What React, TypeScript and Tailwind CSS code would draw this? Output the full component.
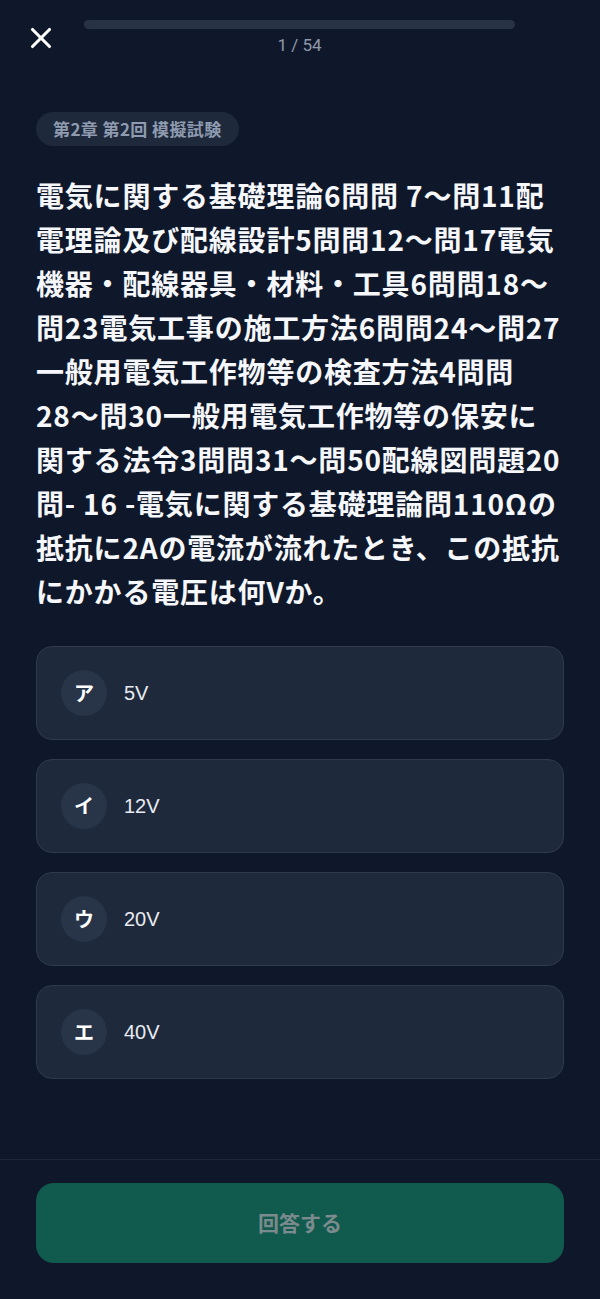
import { X } from "lucide-react";

const lines = [
  "電気に関する基礎理論6問問 7〜問11配",
  "電理論及び配線設計5問問12〜問17電気",
  "機器・配線器具・材料・工具6問問18〜",
  "問23電気工事の施工方法6問問24〜問27",
  "一般用電気工作物等の検査方法4問問",
  "28〜問30一般用電気工作物等の保安に",
  "関する法令3問問31〜問50配線図問題20",
  "問- 16 -電気に関する基礎理論問110Ωの",
  "抵抗に2Aの電流が流れたとき、この抵抗",
  "にかかる電圧は何Vか。",
];

const choices = [
  { label: "ア", text: "5V" },
  { label: "イ", text: "12V" },
  { label: "ウ", text: "20V" },
  { label: "エ", text: "40V" },
];

export default function App() {
  return (
    <div
      className="min-h-[1299px] w-full bg-[#0f172a] text-white flex flex-col"
      style={{ fontFamily: '"Noto Sans CJK JP", "Noto Sans", sans-serif' }}
    >
      {/* Header */}
      <div className="flex items-start px-5 pt-[14px]">
        <button className="w-11 h-11 flex items-center justify-center text-white -ml-[1px] mt-[2px]">
          <X size={34} strokeWidth={2.2} />
        </button>
        <div className="flex-1 flex flex-col items-center ml-[21px] mr-[65px] pt-[6px]">
          <div className="w-full h-[9px] rounded-full bg-[#273244] overflow-hidden">
            <div className="h-full w-[1.8%] bg-[#273244] rounded-full" />
          </div>
          <div
            className="mt-[6px] text-[17px] leading-5 text-[#8f99aa]"
            style={{ fontFamily: 'Roboto, "Liberation Sans", sans-serif' }}
          >
            1 / 54
          </div>
        </div>
      </div>

      {/* Body */}
      <div className="flex-1 px-9 pt-[52px]">
        <div className="inline-flex items-center h-[34px] px-[17px] rounded-full bg-[#1e293b] text-[17px] font-bold tracking-[0.4px] text-[#8f9bb0]">
          第2章 第2回 模擬試験
        </div>

        <div className="mt-[27px] text-[28px] font-bold leading-[44px] tracking-[0.8px] text-[#f5f7fa]">
          {lines.map((l) => (
            <div key={l} className="whitespace-nowrap">
              {l}
            </div>
          ))}
        </div>

        <div className="mt-[33px] flex flex-col gap-[19px]">
          {choices.map((c) => (
            <div
              key={c.label}
              className="h-[94px] rounded-2xl bg-[#1e293b] border border-[#2f3a4d] flex items-center px-6"
            >
              <div className="w-[46px] h-[46px] rounded-full bg-[#283447] flex items-center justify-center text-[20px] font-bold text-white">
                {c.label}
              </div>
              <div
                className="ml-[17px] text-[20px] text-[#e8ecf2]"
                style={{ fontFamily: '"Liberation Sans", "Noto Sans CJK JP", sans-serif' }}
              >
                {c.text}
              </div>
            </div>
          ))}
        </div>
      </div>

      {/* Footer */}
      <div className="border-t border-[#1e293b] px-9 pt-[23px] pb-9">
        <button className="w-full h-[80px] rounded-[18px] bg-[#115a4e] text-[21px] font-bold text-[#7b8a8c]">
          回答する
        </button>
      </div>
    </div>
  );
}
